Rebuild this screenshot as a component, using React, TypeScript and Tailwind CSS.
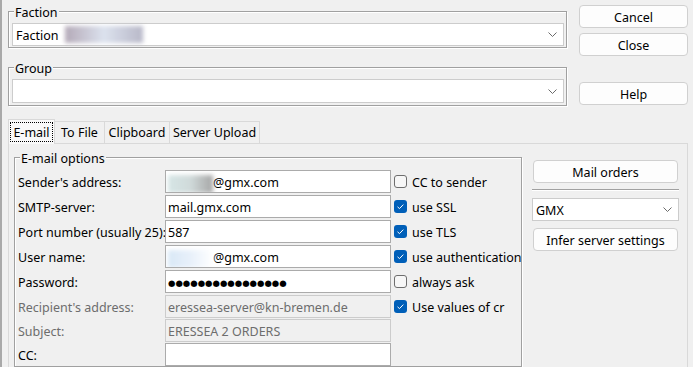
import React from "react";

function Chevron() {
  return (
    <svg width="9" height="5" viewBox="0 0 9 5" className="shrink-0">
      <path d="M0.5 0.5 L4.5 4.5 L8.5 0.5" fill="none" stroke="#6b6b6b" strokeWidth="1" />
    </svg>
  );
}

function GroupBox({
  label,
  className,
  children,
}: {
  label: string;
  className?: string;
  children?: React.ReactNode;
}) {
  return (
    <div
      className={
        "relative border border-[#a0a0a0] shadow-[inset_1px_1px_0_#ffffff,1px_1px_0_#ffffff] " + (className ?? "")
      }
    >
      <span className="absolute left-[5px] top-[-8px] bg-[#f0f0f0] px-[1px] leading-[18px]">{label}</span>
      {children}
    </div>
  );
}

function Combo({ className, children }: { className?: string; children?: React.ReactNode }) {
  return (
    <div
      className={
        "flex items-center justify-between bg-white border border-[#cccccc] pl-[3px] pr-[6px] " + (className ?? "")
      }
    >
      <div className="flex items-center pt-[4px]">{children}</div>
      <Chevron />
    </div>
  );
}

function Btn({ label, className }: { label: string; className?: string }) {
  return (
    <button
      className={
        "flex items-center justify-center h-[23px] pt-[3px] bg-[#fdfdfd] border border-[#d0d0d0] rounded-[4px] leading-none " +
        (className ?? "")
      }
    >
      {label}
    </button>
  );
}

function Check({ checked, label }: { checked: boolean; label: string }) {
  return (
    <div className="flex items-center ml-[3px] shrink-0">
      {checked ? (
        <span className="flex items-center justify-center w-[13px] h-[13px] rounded-[3px] bg-[#005fb8]">
          <svg width="13" height="13" viewBox="0 0 13 13">
            <path d="M3.5 6.8 L5.5 8.6 L9.3 4.6" fill="none" stroke="#ffffff" strokeWidth="1" />
          </svg>
        </span>
      ) : (
        <span className="w-[13px] h-[13px] rounded-[3px] border border-[#6e6e6e] bg-[#f7f7f7]" />
      )}
      <span className="ml-[5px] pt-[4px] whitespace-nowrap">{label}</span>
    </div>
  );
}

type Row = {
  label: string;
  value?: React.ReactNode;
  disabled?: boolean;
  check?: { checked: boolean; label: string };
  mt: string;
};

const rows: Row[] = [
  {
    label: "Sender's address:",
    value: (
      <>
        <span className="shrink-0 w-[45px] h-[18px] bg-gradient-to-r from-[#d6e6e6] via-[#d0dada] to-[#a6a6a6] blur-[2px]" />
        <span>@gmx.com</span>
      </>
    ),
    check: { checked: false, label: "CC to sender" },
    mt: "mt-0",
  },
  { label: "SMTP-server:", value: "mail.gmx.com", check: { checked: true, label: "use SSL" }, mt: "mt-[2px]" },
  { label: "Port number (usually 25):", value: "587", check: { checked: true, label: "use TLS" }, mt: "mt-[2px]" },
  {
    label: "User name:",
    value: (
      <>
        <span className="shrink-0 w-[45px] h-[18px] bg-gradient-to-r from-[#d9e8f6] via-[#e8f0fa] to-[#ffffff] blur-[2px]" />
        <span>@gmx.com</span>
      </>
    ),
    check: { checked: true, label: "use authentication" },
    mt: "mt-[2px]",
  },
  {
    label: "Password:",
    value: <span className="font-['DejaVu_Sans',sans-serif] text-[8.5px]">●●●●●●●●●●●●●●●●</span>,
    check: { checked: false, label: "always ask" },
    mt: "mt-[2px]",
  },
  {
    label: "Recipient's address:",
    value: "eressea-server@kn-bremen.de",
    disabled: true,
    check: { checked: true, label: "Use values of cr" },
    mt: "mt-[2px]",
  },
  { label: "Subject:", value: "ERESSEA 2 ORDERS", disabled: true, mt: "mt-[1px]" },
  { label: "CC:", value: "", mt: "mt-[1px]" },
];

export default function App() {
  return (
    <div className="w-[693px] h-[367px] overflow-hidden bg-[#f0f0f0] border-l-2 border-[#a9a9a9] font-['Noto_Sans',sans-serif] text-[12.5px] text-black">
      {/* top: faction / group + dialog buttons */}
      <div className="flex items-start pl-[6px] pt-[5px]">
        <div className="w-[559px] mt-[6px]">
          <GroupBox label="Faction" className="h-[37px] pl-[3px] pr-[2px] pt-[11px]">
            <Combo className="h-[23px]">
              <span>Faction</span>
              <span className="ml-[6px] mt-[-4px] w-[78px] h-[17px] bg-gradient-to-r from-[#b4aab8] via-[#dce2ee] to-[#b8b8c8] blur-[2px]" />
            </Combo>
          </GroupBox>
          <GroupBox label="Group" className="mt-[19px] h-[39px] pl-[3px] pr-[2px] pt-[11px]">
            <Combo className="h-[24px]" />
          </GroupBox>
        </div>
        <div className="ml-[12px] w-[109px] flex flex-col">
          <Btn label="Cancel" />
          <Btn label="Close" className="mt-[5px]" />
          <Btn label="Help" className="mt-[26px]" />
        </div>
      </div>

      {/* tabs */}
      <div className="flex items-end pl-[6px] mt-[13px] h-[24px]">
        <div className="relative z-10 flex items-center justify-center w-[47px] h-[25px] mb-[-1px] bg-[#f9f9f9] border border-b-0 border-[#d9d9d9]">
          <span className="border border-dotted border-black px-[2px] pt-[1px] leading-[17px]">E-mail</span>
        </div>
        <div className="flex items-center justify-center w-[50px] h-[22px] pt-[2px] border border-l-0 border-b-0 border-[#d9d9d9]">
          To File
        </div>
        <div className="flex items-center justify-center w-[65px] h-[22px] pt-[2px] border border-l-0 border-b-0 border-[#d9d9d9]">
          Clipboard
        </div>
        <div className="flex items-center justify-center w-[90px] h-[22px] pt-[2px] border border-l-0 border-b-0 border-[#d9d9d9]">
          Server Upload
        </div>
      </div>

      {/* tab panel */}
      <div className="ml-[6px] w-[680px] h-[240px] border border-[#d9d9d9] flex items-start pl-[5px] pt-[13px]">
        <GroupBox label="E-mail options" className="shrink-0 w-[508px] h-[210px] pl-[3px] pt-[12px]">
          {rows.map((r) => (
            <div key={r.label} className={"flex items-center h-[23px] " + r.mt}>
              <span className={"shrink-0 w-[147px] pt-[4px] whitespace-nowrap " + (r.disabled ? "text-[#6d6d6d]" : "")}>
                {r.label}
              </span>
              <div
                className={
                  "shrink-0 flex items-center w-[226px] h-[23px] pl-[2px] pt-[4px] border whitespace-nowrap overflow-hidden " +
                  (r.disabled ? "bg-[#f0f0f0] border-[#cccccc] text-[#6d6d6d]" : "bg-white border-[#ababab]")
                }
              >
                {r.value}
              </div>
              {r.check && <Check checked={r.check.checked} label={r.check.label} />}
            </div>
          ))}
        </GroupBox>

        <div className="ml-[10px] w-[147px] flex flex-col mt-[3px]">
          <Btn label="Mail orders" className="mx-[1px]" />
          <div className="mt-[6px] h-px bg-[#a0a0a0] shadow-[0_1px_0_#ffffff]" />
          <Combo className="mt-[8px] h-[23px]">
            <span>GMX</span>
          </Combo>
          <Btn label="Infer server settings" className="mx-[1px] mt-[7px]" />
        </div>
      </div>
    </div>
  );
}
